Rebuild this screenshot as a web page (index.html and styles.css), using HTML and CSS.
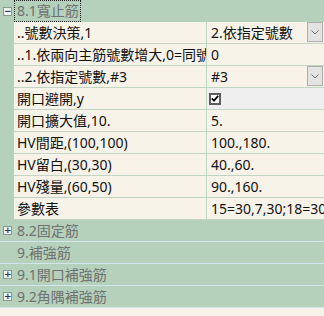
FILE: index.html
```html
<!DOCTYPE html>
<html lang="zh-Hant">
<head>
    <meta charset="UTF-8">
    <title>屬性</title>
    <link rel="stylesheet" href="styles.css">
</head>
<body>
    <div id="grid">
        <div class="category open">
            <span class="toggle">&minus;</span>
            <span class="cat-label focused">8.1寬止筋</span>
        </div>
        <div class="prop">
            <span class="gutter"></span>
            <span class="name">..號數決策,1</span>
            <span class="value">
                <span class="text">2.依指定號數</span>
                <span class="drop"><svg width="8" height="5" viewBox="0 0 8 5"><path d="M0.5 0.5 L4 4 L7.5 0.5" fill="none" stroke="#707070" stroke-width="1"/></svg></span>
            </span>
        </div>
        <div class="prop">
            <span class="gutter"></span>
            <span class="name">..1.依兩向主筋號數增大,0=同號</span>
            <span class="value"><span class="text">0</span></span>
        </div>
        <div class="prop">
            <span class="gutter"></span>
            <span class="name">..2.依指定號數,#3</span>
            <span class="value">
                <span class="text">#3</span>
                <span class="drop"><svg width="8" height="5" viewBox="0 0 8 5"><path d="M0.5 0.5 L4 4 L7.5 0.5" fill="none" stroke="#707070" stroke-width="1"/></svg></span>
            </span>
        </div>
        <div class="prop">
            <span class="gutter"></span>
            <span class="name">開口避開,y</span>
            <span class="value selected">
                <span class="check"><svg width="8" height="7" viewBox="0 0 8 7"><path d="M0.8 3.4 L3 5.6 L7.2 0.8" fill="none" stroke="#000" stroke-width="1.8"/></svg></span>
            </span>
        </div>
        <div class="prop">
            <span class="gutter"></span>
            <span class="name">開口擴大值,10.</span>
            <span class="value"><span class="text">5.</span></span>
        </div>
        <div class="prop">
            <span class="gutter"></span>
            <span class="name">HV間距,(100,100)</span>
            <span class="value"><span class="text">100.,180.</span></span>
        </div>
        <div class="prop">
            <span class="gutter"></span>
            <span class="name">HV留白,(30,30)</span>
            <span class="value"><span class="text">40.,60.</span></span>
        </div>
        <div class="prop">
            <span class="gutter"></span>
            <span class="name">HV殘量,(60,50)</span>
            <span class="value"><span class="text">90.,160.</span></span>
        </div>
        <div class="prop">
            <span class="gutter"></span>
            <span class="name">參數表</span>
            <span class="value"><span class="text">15=30,7,30;18=30,7,30</span></span>
        </div>
        <div class="category closed">
            <span class="toggle">+</span>
            <span class="cat-label">8.2固定筋</span>
        </div>
        <div class="category">
            <span class="toggle none"></span>
            <span class="cat-label">9.補強筋</span>
        </div>
        <div class="category closed">
            <span class="toggle">+</span>
            <span class="cat-label">9.1開口補強筋</span>
        </div>
        <div class="category closed">
            <span class="toggle">+</span>
            <span class="cat-label">9.2角隅補強筋</span>
        </div>
    </div>
</body>
</html>
```

FILE: styles.css
```css
body {
    margin: 0;
    background-color: #f7f3e9;
}

#grid {
    width: 324px;
    height: 316px;
    overflow: hidden;
    background-color: #f7f3e9;
    font-family: "Noto Sans", "Noto Sans CJK TC", sans-serif;
    font-size: 14px;
    color: #111;
}

.category {
    display: flex;
    align-items: center;
    height: 22px;
    box-sizing: border-box;
    background-color: #b5d0bb;
    color: #6e7270;
    border-bottom: 1px solid #d3e6ec;
}

.category.open {
    border-bottom: none;
}

.toggle {
    width: 9px;
    height: 9px;
    margin: 0 2px 0 3px;
    box-sizing: border-box;
    border: 1px solid #8a9a90;
    background-color: #eef2ef;
    color: #2a3a60;
    font-family: "DejaVu Sans", sans-serif;
    font-size: 9px;
    line-height: 7px;
    text-align: center;
    font-weight: bold;
}

.toggle.none {
    border: none;
    background: none;
}

.cat-label {
    height: 22px;
    line-height: 21px;
    padding: 0 1px 0 3px;
    box-sizing: border-box;
}

.cat-label.focused {
    border: 1px dotted #222;
    line-height: 19px;
    padding: 0 1px 0 2px;
}

.prop {
    display: grid;
    grid-template-columns: 14px 193px 1fr;
    height: 22px;
}

.gutter {
    background-color: #b5d0bb;
}

.name, .value {
    box-sizing: border-box;
    border-bottom: 1px solid #c2d5c5;
    line-height: 21px;
    white-space: nowrap;
    overflow: hidden;
}

.name {
    padding-left: 3px;
    border-right: 1px solid #c2d5c5;
}

.value {
    display: flex;
    align-items: center;
    padding-left: 4px;
}

.value .text {
    flex: 1;
    overflow: hidden;
}

.value.selected {
    background-color: #efefef;
    padding-left: 2px;
}

.drop {
    width: 16px;
    height: 20px;
    margin: 0 1px 1px 0;
    box-sizing: border-box;
    border: 1px solid #adadad;
    background-color: #e3e3e3;
    display: flex;
    align-items: center;
    justify-content: center;
}

.check {
    width: 12px;
    height: 12px;
    box-sizing: border-box;
    border: 2px solid #5c5c5c;
    background-color: #fff;
    display: flex;
    align-items: center;
    justify-content: center;
}
```
